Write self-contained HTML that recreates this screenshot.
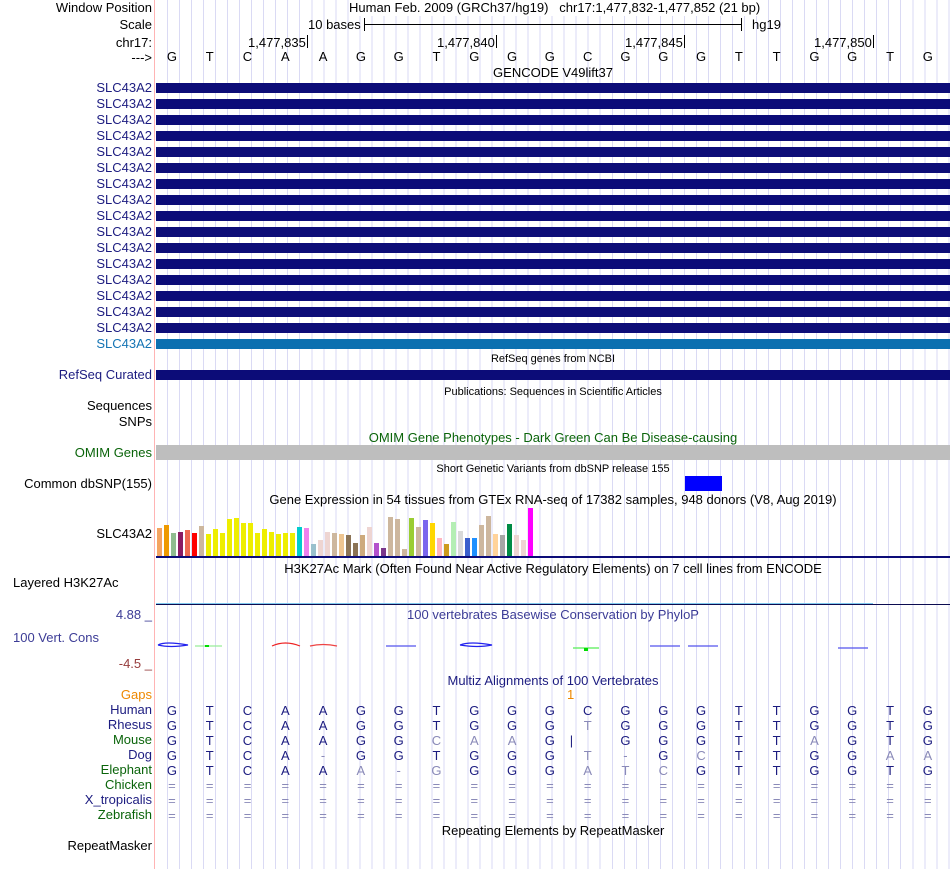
<!DOCTYPE html>
<html><head><meta charset="utf-8"><style>
*{margin:0;padding:0}
body{width:950px;height:869px;background:#fff;position:relative;overflow:hidden;font-family:"Liberation Sans",sans-serif;font-size:13px;color:#000}
.grid{position:absolute;left:156px;top:0;width:794px;height:869px;background:repeating-linear-gradient(90deg,transparent 0,transparent 11.02px,#dadaf4 11.02px,#dadaf4 12.02px)}
.vb{position:absolute;left:154px;top:0;width:1px;height:869px;background:#ffb4b4}
.l{position:absolute;right:798px;line-height:16px;white-space:nowrap;text-align:right}
.n{color:#1c1c80}
.g{color:#0a640a}
.c{position:absolute;left:156px;width:794px;text-align:center;line-height:16px;white-space:nowrap}
.s{font-size:11px}
.bar{position:absolute;left:156px;width:794px;height:10px;background:#0c0c78}
.row{position:absolute;left:153px;display:flex;line-height:15px;font-size:13px}
.row span{width:37.8px;text-align:center;display:block}
.gy{color:#8a8ab8}
.t{position:absolute;line-height:16px;white-space:nowrap}
.gb{position:absolute;width:5px}
</style></head><body>
<div class="grid"></div>
<div class="vb"></div>

<div class="l" style="top:0">Window Position</div>
<div class="l" style="top:17px">Scale</div>
<div class="l" style="top:35px">chr17:</div>
<div class="l" style="top:50px">---&gt;</div>

<div class="t" style="left:349px;top:0;background:#fff">Human Feb. 2009 (GRCh37/hg19)&nbsp;&nbsp;&nbsp;chr17:1,477,832-1,477,852 (21 bp)</div>
<div class="t" style="left:308px;top:17px">10 bases</div>
<div style="position:absolute;left:364px;top:24px;width:377px;height:1px;background:#000"></div>
<div style="position:absolute;left:364px;top:18px;width:1px;height:13px;background:#000"></div>
<div style="position:absolute;left:741px;top:18px;width:1px;height:13px;background:#000"></div>
<div class="t" style="left:752px;top:17px">hg19</div>

<div class="t" style="left:248px;top:35px">1,477,835</div><div style="position:absolute;left:307px;top:35px;width:1px;height:13px;background:#000"></div>
<div class="t" style="left:437px;top:35px">1,477,840</div><div style="position:absolute;left:496px;top:35px;width:1px;height:13px;background:#000"></div>
<div class="t" style="left:625px;top:35px">1,477,845</div><div style="position:absolute;left:684px;top:35px;width:1px;height:13px;background:#000"></div>
<div class="t" style="left:814px;top:35px">1,477,850</div><div style="position:absolute;left:873px;top:35px;width:1px;height:13px;background:#000"></div>

<div class="row" style="top:49px"><span>G</span><span>T</span><span>C</span><span>A</span><span>A</span><span>G</span><span>G</span><span>T</span><span>G</span><span>G</span><span>G</span><span>C</span><span>G</span><span>G</span><span>G</span><span>T</span><span>T</span><span>G</span><span>G</span><span>T</span><span>G</span></div>

<div class="c" style="top:65px">GENCODE V49lift37</div>

<div class="l n" style="top:80px">SLC43A2</div><div class="bar" style="top:83px"></div>
<div class="l n" style="top:96px">SLC43A2</div><div class="bar" style="top:99px"></div>
<div class="l n" style="top:112px">SLC43A2</div><div class="bar" style="top:115px"></div>
<div class="l n" style="top:128px">SLC43A2</div><div class="bar" style="top:131px"></div>
<div class="l n" style="top:144px">SLC43A2</div><div class="bar" style="top:147px"></div>
<div class="l n" style="top:160px">SLC43A2</div><div class="bar" style="top:163px"></div>
<div class="l n" style="top:176px">SLC43A2</div><div class="bar" style="top:179px"></div>
<div class="l n" style="top:192px">SLC43A2</div><div class="bar" style="top:195px"></div>
<div class="l n" style="top:208px">SLC43A2</div><div class="bar" style="top:211px"></div>
<div class="l n" style="top:224px">SLC43A2</div><div class="bar" style="top:227px"></div>
<div class="l n" style="top:240px">SLC43A2</div><div class="bar" style="top:243px"></div>
<div class="l n" style="top:256px">SLC43A2</div><div class="bar" style="top:259px"></div>
<div class="l n" style="top:272px">SLC43A2</div><div class="bar" style="top:275px"></div>
<div class="l n" style="top:288px">SLC43A2</div><div class="bar" style="top:291px"></div>
<div class="l n" style="top:304px">SLC43A2</div><div class="bar" style="top:307px"></div>
<div class="l n" style="top:320px">SLC43A2</div><div class="bar" style="top:323px"></div>
<div class="l" style="top:336px;color:#1474b4">SLC43A2</div><div class="bar" style="top:339px;background:#0c70b0"></div>

<div class="c s" style="top:351px">RefSeq genes from NCBI</div>
<div class="l n" style="top:367px">RefSeq Curated</div><div class="bar" style="top:370px"></div>
<div class="c s" style="top:384px">Publications: Sequences in Scientific Articles</div>
<div class="l" style="top:398px">Sequences</div>
<div class="l" style="top:414px">SNPs</div>
<div class="c g" style="top:430px">OMIM Gene Phenotypes - Dark Green Can Be Disease-causing</div>
<div class="l g" style="top:445px">OMIM Genes</div>
<div style="position:absolute;left:156px;top:445px;width:794px;height:15px;background:#bebebe"></div>
<div class="c s" style="top:461px">Short Genetic Variants from dbSNP release 155</div>
<div class="l" style="top:476px">Common dbSNP(155)</div>
<div style="position:absolute;left:685px;top:476px;width:37px;height:15px;background:#0000ff"></div>
<div class="c" style="top:492px">Gene Expression in 54 tissues from GTEx RNA-seq of 17382 samples, 948 donors (V8, Aug 2019)</div>
<div class="l" style="top:526px">SLC43A2</div>

<div class="gb" style="left:157px;top:528px;height:28px;background:#F4A460"></div>
<div class="gb" style="left:164px;top:525px;height:31px;background:#EE9A00"></div>
<div class="gb" style="left:171px;top:533px;height:23px;background:#8FBC8F"></div>
<div class="gb" style="left:178px;top:532px;height:24px;background:#8B1C62"></div>
<div class="gb" style="left:185px;top:530px;height:26px;background:#EE6A50"></div>
<div class="gb" style="left:192px;top:533px;height:23px;background:#FF0000"></div>
<div class="gb" style="left:199px;top:526px;height:30px;background:#CDB79E"></div>
<div class="gb" style="left:206px;top:534px;height:22px;background:#EEEE00"></div>
<div class="gb" style="left:213px;top:529px;height:27px;background:#EEEE00"></div>
<div class="gb" style="left:220px;top:533px;height:23px;background:#EEEE00"></div>
<div class="gb" style="left:227px;top:519px;height:37px;background:#EEEE00"></div>
<div class="gb" style="left:234px;top:518px;height:38px;background:#EEEE00"></div>
<div class="gb" style="left:241px;top:523px;height:33px;background:#EEEE00"></div>
<div class="gb" style="left:248px;top:523px;height:33px;background:#EEEE00"></div>
<div class="gb" style="left:255px;top:533px;height:23px;background:#EEEE00"></div>
<div class="gb" style="left:262px;top:529px;height:27px;background:#EEEE00"></div>
<div class="gb" style="left:269px;top:532px;height:24px;background:#EEEE00"></div>
<div class="gb" style="left:276px;top:534px;height:22px;background:#EEEE00"></div>
<div class="gb" style="left:283px;top:533px;height:23px;background:#EEEE00"></div>
<div class="gb" style="left:290px;top:533px;height:23px;background:#EEEE00"></div>
<div class="gb" style="left:297px;top:527px;height:29px;background:#00CDCD"></div>
<div class="gb" style="left:304px;top:528px;height:28px;background:#EE82EE"></div>
<div class="gb" style="left:311px;top:544px;height:12px;background:#9AC0CD"></div>
<div class="gb" style="left:318px;top:540px;height:16px;background:#EED5D2"></div>
<div class="gb" style="left:325px;top:532px;height:24px;background:#EED5D2"></div>
<div class="gb" style="left:332px;top:533px;height:23px;background:#CDB79E"></div>
<div class="gb" style="left:339px;top:534px;height:22px;background:#EEC591"></div>
<div class="gb" style="left:346px;top:535px;height:21px;background:#8B7355"></div>
<div class="gb" style="left:353px;top:543px;height:13px;background:#8B7355"></div>
<div class="gb" style="left:360px;top:535px;height:21px;background:#CDAA7D"></div>
<div class="gb" style="left:367px;top:527px;height:29px;background:#EED5D2"></div>
<div class="gb" style="left:374px;top:543px;height:13px;background:#B452CD"></div>
<div class="gb" style="left:381px;top:548px;height:8px;background:#7A378B"></div>
<div class="gb" style="left:388px;top:517px;height:39px;background:#CDB79E"></div>
<div class="gb" style="left:395px;top:519px;height:37px;background:#CDB79E"></div>
<div class="gb" style="left:402px;top:549px;height:7px;background:#CDB79E"></div>
<div class="gb" style="left:409px;top:518px;height:38px;background:#9ACD32"></div>
<div class="gb" style="left:416px;top:527px;height:29px;background:#CDB79E"></div>
<div class="gb" style="left:423px;top:520px;height:36px;background:#7A67EE"></div>
<div class="gb" style="left:430px;top:523px;height:33px;background:#FFD700"></div>
<div class="gb" style="left:437px;top:538px;height:18px;background:#FFB6C1"></div>
<div class="gb" style="left:444px;top:544px;height:12px;background:#CD9B1D"></div>
<div class="gb" style="left:451px;top:522px;height:34px;background:#B4EEB4"></div>
<div class="gb" style="left:458px;top:531px;height:25px;background:#D9D9D9"></div>
<div class="gb" style="left:465px;top:538px;height:18px;background:#3A5FCD"></div>
<div class="gb" style="left:472px;top:538px;height:18px;background:#1E90FF"></div>
<div class="gb" style="left:479px;top:525px;height:31px;background:#CDB79E"></div>
<div class="gb" style="left:486px;top:516px;height:40px;background:#CDB79E"></div>
<div class="gb" style="left:493px;top:534px;height:22px;background:#FFD39B"></div>
<div class="gb" style="left:500px;top:535px;height:21px;background:#A6A6A6"></div>
<div class="gb" style="left:507px;top:524px;height:32px;background:#008B45"></div>
<div class="gb" style="left:514px;top:535px;height:21px;background:#EED5D2"></div>
<div class="gb" style="left:521px;top:540px;height:16px;background:#EED5D2"></div>
<div class="gb" style="left:528px;top:508px;height:48px;background:#FF00FF"></div>
<div style="position:absolute;left:156px;top:556px;width:794px;height:2px;background:#0c0c78"></div>

<div class="c" style="top:561px">H3K27Ac Mark (Often Found Near Active Regulatory Elements) on 7 cell lines from ENCODE</div>
<div class="t" style="top:575px;left:13px">Layered H3K27Ac</div>
<div style="position:absolute;left:156px;top:603px;width:717px;height:2px;background:#7ec8ee"></div>
<div style="position:absolute;left:156px;top:604px;width:794px;height:1px;background:#0c0c50"></div>

<div class="l" style="top:607px;color:#3c3c96">4.88 _</div>
<div class="c" style="top:607px;color:#3c3c96">100 vertebrates Basewise Conservation by PhyloP</div>
<div class="t" style="top:630px;left:13px;color:#3c3c96">100 Vert. Cons</div>
<div class="l" style="top:656px;color:#963c3c">-4.5 _</div>
<svg style="position:absolute;left:0;top:0" width="950" height="869">
<g fill="none" stroke-width="1.2">
<path d="M158 645 Q165 641 188 645 Q170 648 158 645" stroke="#2222ee"/>
<path d="M195 646 H222" stroke="#99ee99"/><rect x="205" y="645" width="4" height="2" fill="#00dd00" stroke="none"/>
<path d="M272 646 Q285 640 300 646" stroke="#ee2222"/>
<path d="M310 646 Q323 643 337 646" stroke="#ee4444"/>
<path d="M386 646 H416" stroke="#5555ee"/>
<path d="M460 645 Q470 641 492 645 Q478 648 460 645" stroke="#2222ee"/>
<path d="M573 648 H599" stroke="#55ee55"/><rect x="584" y="648" width="4" height="3" fill="#00dd00" stroke="none"/>
<path d="M650 646 H680" stroke="#5555ee"/>
<path d="M688 646 H718" stroke="#5555ee"/>
<path d="M838 648 H868" stroke="#5555ee"/>
</g></svg>

<div class="c n" style="top:673px">Multiz Alignments of 100 Vertebrates</div>
<div class="l" style="top:687px;color:#ee8800">Gaps</div>
<div class="t" style="left:567px;top:687px;color:#ee8800">1</div>
<div class="l n" style="top:702px">Human</div>
<div class="l n" style="top:717px">Rhesus</div>
<div class="l g" style="top:732px">Mouse</div>
<div class="l n" style="top:747px">Dog</div>
<div class="l g" style="top:762px">Elephant</div>
<div class="l g" style="top:777px">Chicken</div>
<div class="l n" style="top:792px">X_tropicalis</div>
<div class="l g" style="top:807px">Zebrafish</div>

<div class="row n" style="top:703px"><span>G</span><span>T</span><span>C</span><span>A</span><span>A</span><span>G</span><span>G</span><span>T</span><span>G</span><span>G</span><span>G</span><span>C</span><span>G</span><span>G</span><span>G</span><span>T</span><span>T</span><span>G</span><span>G</span><span>T</span><span>G</span></div>
<div class="row n" style="top:718px"><span>G</span><span>T</span><span>C</span><span>A</span><span>A</span><span>G</span><span>G</span><span>T</span><span>G</span><span>G</span><span>G</span><span class="gy">T</span><span>G</span><span>G</span><span>G</span><span>T</span><span>T</span><span>G</span><span>G</span><span>T</span><span>G</span></div>
<div class="row n" style="top:733px"><span>G</span><span>T</span><span>C</span><span>A</span><span>A</span><span>G</span><span>G</span><span class="gy">C</span><span class="gy">A</span><span class="gy">A</span><span>G</span><span style="text-align:left;padding-left:1px;width:36.8px">|</span><span>G</span><span>G</span><span>G</span><span>T</span><span>T</span><span class="gy">A</span><span>G</span><span>T</span><span>G</span></div>
<div class="row n" style="top:748px"><span>G</span><span>T</span><span>C</span><span>A</span><span class="gy">-</span><span>G</span><span>G</span><span>T</span><span>G</span><span>G</span><span>G</span><span class="gy">T</span><span class="gy">-</span><span>G</span><span class="gy">C</span><span>T</span><span>T</span><span>G</span><span>G</span><span class="gy">A</span><span class="gy">A</span></div>
<div class="row n" style="top:763px"><span>G</span><span>T</span><span>C</span><span>A</span><span>A</span><span class="gy">A</span><span class="gy">-</span><span class="gy">G</span><span>G</span><span>G</span><span>G</span><span class="gy">A</span><span class="gy">T</span><span class="gy">C</span><span>G</span><span>T</span><span>T</span><span>G</span><span>G</span><span>T</span><span>G</span></div>
<div class="row gy" style="top:778px"><span>=</span><span>=</span><span>=</span><span>=</span><span>=</span><span>=</span><span>=</span><span>=</span><span>=</span><span>=</span><span>=</span><span>=</span><span>=</span><span>=</span><span>=</span><span>=</span><span>=</span><span>=</span><span>=</span><span>=</span><span>=</span></div>
<div class="row gy" style="top:793px"><span>=</span><span>=</span><span>=</span><span>=</span><span>=</span><span>=</span><span>=</span><span>=</span><span>=</span><span>=</span><span>=</span><span>=</span><span>=</span><span>=</span><span>=</span><span>=</span><span>=</span><span>=</span><span>=</span><span>=</span><span>=</span></div>
<div class="row gy" style="top:808px"><span>=</span><span>=</span><span>=</span><span>=</span><span>=</span><span>=</span><span>=</span><span>=</span><span>=</span><span>=</span><span>=</span><span>=</span><span>=</span><span>=</span><span>=</span><span>=</span><span>=</span><span>=</span><span>=</span><span>=</span><span>=</span></div>

<div class="c" style="top:823px">Repeating Elements by RepeatMasker</div>
<div class="l" style="top:838px">RepeatMasker</div>
</body></html>
